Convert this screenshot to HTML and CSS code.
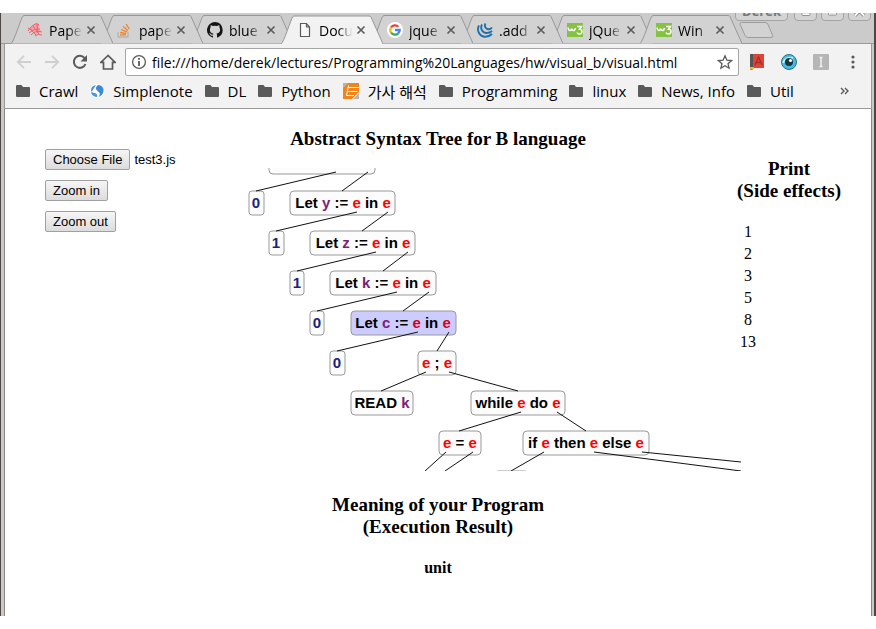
FILE: index.html
```html
<!DOCTYPE html>
<html lang="en">
<head>
<meta charset="utf-8">
<title>Document</title>
<link rel="stylesheet" href="styles.css">
</head>
<body>
<svg class="defs" aria-hidden="true">
  <symbol id="tab" viewBox="0 0 102 29"><path d="M0 28.5 C3 27 10 3 12 1 Q12.500 .5 14 .5 H88 Q89.500 .5 90 1.500 L102 28.500"/></symbol>
  <symbol id="close" viewBox="0 0 10 10"><path d="M1.500 1.500 8.500 8.500M8.500 1.500 1.500 8.500" fill="none" stroke="#5a5a5a" stroke-width="1.600"/></symbol>
  <symbol id="folder" viewBox="0 0 14 12"><path d="M1 0H5.500L7 2H13Q14 2 14 3V11Q14 12 13 12H1Q0 12 0 11V1Q0 0 1 0Z" fill="#5a5a5a"/></symbol>
  <symbol id="w3" viewBox="0 0 16 16"><rect y="1" width="16" height="14" fill="#84c341"/><path d="M1 5.500q.5 3 2 3t1.500-2q.5 2 2 2T8.500 6M10 4.500h4.500L12.500 7.300q2.500 0 2.500 2.200T12.500 12Q10.500 12 10 10.500" fill="none" stroke="#fff" stroke-width="1.500"/></symbol>
</svg>
<div class="window">
  <header class="chrome">
    <div class="titlebar">
      <ul class="tabs">
        <li class="tab"><svg class="shape"><use href="#tab"/></svg>
          <svg class="fav" viewBox="0 0 16 16"><path d="M3 6Q6 2 10 2q3 1 2 4l2 3-5 3-5-3z" fill="#f5a3a8"/><path d="M1 9Q4 4 8 2q3-1 4 1M2 11q5-5 11-4M4 13q4-5 11-3M3 7l6 6M6 4l6 8M10 2l1 9M8 14q3-3 7-1M1 6l4 2" fill="none" stroke="#f0626c" stroke-width="1"/></svg>
          <span class="name">Pape</span><button class="close" aria-label="Close tab"><svg><use href="#close"/></svg></button></li>
        <li class="tab"><svg class="shape"><use href="#tab"/></svg>
          <svg class="fav" viewBox="0 0 16 16"><path d="M1 10v5h10v-5" fill="none" stroke="#b5b5b0" stroke-width="1.300"/><path d="M3 12.800h6M3.200 10.500l6 .8M4 7.500l6 2.300M6 4.500l5 4M9 2l3.300 5" fill="none" stroke="#f48024" stroke-width="1.300"/></svg>
          <span class="name">pape</span><button class="close" aria-label="Close tab"><svg><use href="#close"/></svg></button></li>
        <li class="tab"><svg class="shape"><use href="#tab"/></svg>
          <svg class="fav" viewBox="0 0 16 16"><path d="M8 0a8 8 0 0 0-2.500 15.600c.4.100.5-.2.500-.4v-1.500c-2.200.500-2.700-1-2.700-1-.4-.9-.9-1.200-.9-1.200-.7-.5.100-.5.100-.5.800.1 1.200.8 1.200.8.700 1.200 1.900.9 2.300.7.100-.5.300-.9.500-1.100-1.800-.2-3.600-.9-3.600-4 0-.9.300-1.600.8-2.100-.1-.2-.4-1 .1-2.100 0 0 .7-.2 2.200.8a7.500 7.500 0 0 1 4 0c1.500-1 2.200-.8 2.200-.8.400 1.100.2 1.900.1 2.100.5.600.8 1.300.8 2.100 0 3.100-1.900 3.700-3.700 3.900.3.300.6.800.6 1.500v2.200c0 .2.100.5.600.4A8 8 0 0 0 8 0z" fill="#151515"/></svg>
          <span class="name">blue</span><button class="close" aria-label="Close tab"><svg><use href="#close"/></svg></button></li>
        <li class="tab active"><svg class="shape"><use href="#tab"/></svg>
          <svg class="fav" viewBox="0 0 16 16"><path d="M3.500 1.500h6l3 3.500v9.500h-9zM9.500 1.500V5h3" fill="#f8f8f8" stroke="#5a5a5a" stroke-width="1.200"/></svg>
          <span class="name">Docu</span><button class="close" aria-label="Close tab"><svg><use href="#close"/></svg></button></li>
        <li class="tab"><svg class="shape"><use href="#tab"/></svg>
          <svg class="fav" viewBox="0 0 16 16"><circle cx="8" cy="8" r="8" fill="#fff"/><g fill="none" stroke-width="2.300"><path d="M4 5.500A4.700 4.700 0 0 1 11.300 4.700" stroke="#ea4335"/><path d="M4 5.500A4.700 4.700 0 0 0 4 10.500" stroke="#fbbc05"/><path d="M4 10.500A4.700 4.700 0 0 0 11.200 11.400" stroke="#34a853"/><path d="M8 8h4.700A4.700 4.700 0 0 1 11.200 11.400" stroke="#4285f4"/></g></svg>
          <span class="name">jque</span><button class="close" aria-label="Close tab"><svg><use href="#close"/></svg></button></li>
        <li class="tab"><svg class="shape"><use href="#tab"/></svg>
          <svg class="fav" viewBox="0 0 16 16"><path d="M2 3.500C-.5 8 2 14 7.500 14.700Q12 15 15 12M5 2.500C3 6 5 10.500 9 11Q12.500 11.300 15 9M8.500 1.500C7 4 8.500 7 11 7.300Q13.500 7.500 15 5.500" fill="none" stroke="#2070ac" stroke-width="1.900"/></svg>
          <span class="name">.add</span><button class="close" aria-label="Close tab"><svg><use href="#close"/></svg></button></li>
        <li class="tab"><svg class="shape"><use href="#tab"/></svg>
          <svg class="fav"><use href="#w3"/></svg>
          <span class="name">jQue</span><button class="close" aria-label="Close tab"><svg><use href="#close"/></svg></button></li>
        <li class="tab"><svg class="shape"><use href="#tab"/></svg>
          <svg class="fav"><use href="#w3"/></svg>
          <span class="name">Win</span><button class="close" aria-label="Close tab"><svg><use href="#close"/></svg></button></li>
      </ul>
      <button class="newtab" aria-label="New tab"><svg viewBox="0 0 36 18"><path d="M2.500 1.500Q.5 1.500 1.200 3.500L6 14.500Q7 16.500 9 16.500H32Q34.500 16.500 33.700 14.500L29 3.500Q28 1.500 26 1.500Z" fill="#d2d2d2" stroke="#9c9c9c"/></svg></button>
      <div class="controls">
        <button class="user">Derek</button>
        <button class="ctl" aria-label="Minimize"><svg viewBox="0 0 22 20"><rect x="7" y="12" width="9" height="3" rx="1" fill="#fff" stroke="#888"/></svg></button>
        <button class="ctl" aria-label="Maximize"><svg viewBox="0 0 22 20"><rect x="6.500" y="5.500" width="9" height="9" rx="1" fill="#fff" stroke="#888"/><rect x="9" y="9" width="4" height="3" fill="#ccc" stroke="#888"/></svg></button>
        <button class="ctl" aria-label="Close"><svg viewBox="0 0 22 20"><path d="M6 5l10 10M16 5L6 15" stroke="#888" stroke-width="4"/><path d="M6 5l10 10M16 5L6 15" stroke="#fff" stroke-width="2"/></svg></button>
      </div>
    </div>
    <div class="toolbar">
      <nav class="nav">
        <button aria-label="Back"><svg viewBox="0 0 16 16"><path d="M15 8H2M8 1.800 1.800 8 8 14.200" fill="none" stroke="#cfcfcf" stroke-width="1.800"/></svg></button>
        <button aria-label="Forward"><svg viewBox="0 0 16 16"><path d="M1 8H14M8 1.800 14.200 8 8 14.200" fill="none" stroke="#cfcfcf" stroke-width="1.800"/></svg></button>
        <button aria-label="Reload"><svg viewBox="0 0 16 16"><path d="M13.500 10A6 6 0 1 1 12.500 4" fill="none" stroke="#5a5a5a" stroke-width="2"/><path d="M15 1v6.500H8.500z" fill="#5a5a5a"/></svg></button>
        <button aria-label="Home"><svg viewBox="0 0 16 16"><path d="M8 1.500.8 8.300H3.500V15H12.500V8.300H15.200Z" fill="none" stroke="#5a5a5a" stroke-width="1.700"/></svg></button>
      </nav>
      <div class="omnibox">
        <svg class="info" viewBox="0 0 16 16"><circle cx="8" cy="8" r="6.400" fill="none" stroke="#5a5a5a" stroke-width="1.300"/><path d="M8 4v1.800M8 7v5" stroke="#5a5a5a" stroke-width="1.800"/></svg>
        <input type="text" aria-label="Address" value="file:///home/derek/lectures/Programming%20Languages/hw/visual_b/visual.html">
        <button aria-label="Bookmark this page"><svg viewBox="0 0 16 16"><path d="M8 1.800 9.900 6.200 14.500 6.600 11 9.700 12.100 14.200 8 11.800 3.900 14.200 5 9.700 1.500 6.600 6.100 6.200Z" fill="none" stroke="#5a5a5a" stroke-width="1.300"/></svg></button>
      </div>
      <div class="extensions">
        <button aria-label="Dictionary"><svg viewBox="0 0 16 16"><path d="M1 0h14v14H5l-2 2H1z" fill="#dc4437"/><path d="M1 0h3v14H1z" fill="#555"/><path d="M1 13h4l-1 3-1-1-2 1z" fill="#f4b428"/><path d="M6 11 9.500 3 13 11M7.500 8.500h4" fill="none" stroke="#ad2b22" stroke-width="1.300"/></svg></button>
        <button aria-label="Eye"><svg viewBox="0 0 16 16"><circle cx="8" cy="8" r="7.500" fill="#49b9dc" stroke="#28728c"/><path d="M2 9Q4 3 12 4" fill="none" stroke="#c4ecf8" stroke-width="2"/><circle cx="8" cy="8" r="4" fill="#163746"/><circle cx="9.500" cy="6.500" r="1.600" fill="#fff"/></svg></button>
        <button aria-label="Instapaper"><svg viewBox="0 0 16 16"><rect width="16" height="16" rx="1" fill="#b6b6b6"/><path d="M6.500 3.500h3M8 3.500v9M6.500 12.500h3" stroke="#f0f0f0" stroke-width="1.500"/></svg></button>
        <button aria-label="Menu"><svg viewBox="0 0 16 16" fill="#5a5a5a"><circle cx="8" cy="3" r="1.600"/><circle cx="8" cy="8" r="1.600"/><circle cx="8" cy="13" r="1.600"/></svg></button>
      </div>
    </div>
    <nav class="bookmarks">
      <a href="#"><svg class="folder"><use href="#folder"/></svg>Crawl</a>
      <a href="#"><svg class="folder round" viewBox="0 0 14 14"><circle cx="7" cy="7" r="7" fill="#fff"/><path d="M6 1Q1 2 1 6q0 3 4 3 3 1 2 4Q3 13 1 9" fill="#4a97db"/><path d="M8 1q4 0 5.500 4Q14 11 8.500 13q3-4-1-6Q4 4 8 1" fill="#3d8ad2"/></svg>Simplenote</a>
      <a href="#"><svg class="folder"><use href="#folder"/></svg>DL</a>
      <a href="#"><svg class="folder"><use href="#folder"/></svg>Python</a>
      <a href="#"><svg class="fav" viewBox="0 0 16 16"><path d="M0 0h16v16H0z" fill="#b5b5b5"/><path d="M0 5 5 0H16V10L10 16H0z" fill="#f08519"/><path d="M5.500 2.500 3.500 12.500H11M5.500 4.500H16M5 8.500H14.500M16 9.500 9.500 16" fill="none" stroke="#fff" stroke-width="1"/></svg>가사 해석</a>
      <a href="#"><svg class="folder"><use href="#folder"/></svg>Programming</a>
      <a href="#"><svg class="folder"><use href="#folder"/></svg>linux</a>
      <a href="#"><svg class="folder"><use href="#folder"/></svg>News, Info</a>
      <a href="#"><svg class="folder"><use href="#folder"/></svg>Util</a>
      <button class="more" aria-label="More bookmarks"><svg viewBox="0 0 9 8"><path d="M1 1l3 3-3 3M5 1l3 3-3 3" fill="none" stroke="#5a5a5a" stroke-width="1.400"/></svg></button>
    </nav>
  </header>
  <main class="page">
    <h3 class="title">Abstract Syntax Tree for B language</h3>
    <div class="work">
      <section class="tools">
        <input type="file" id="source" aria-label="Program source">
        <button>Zoom in</button>
        <button>Zoom out</button>
      </section>
      <svg class="tree" viewBox="245 168 496 303" role="img" aria-label="Syntax tree">
        <g class="box">
          <rect x="269" y="150" width="106" height="24" rx="4"/>
          <rect x="249" y="191" width="15" height="24" rx="3"/>
          <rect x="290" y="191" width="105" height="24" rx="4"/>
          <rect x="269" y="231" width="15" height="24" rx="3"/>
          <rect x="310" y="231" width="105" height="24" rx="4"/>
          <rect x="290" y="271" width="14" height="24" rx="3"/>
          <rect x="330" y="271" width="106" height="24" rx="4"/>
          <rect x="310" y="311" width="14" height="24" rx="3"/>
          <rect class="current" x="351" y="311" width="105" height="24" rx="4"/>
          <rect x="330" y="351" width="15" height="24" rx="3"/>
          <rect x="418" y="351" width="38" height="24" rx="4"/>
          <rect x="351" y="391" width="62" height="24" rx="4"/>
          <rect x="471" y="391" width="94" height="24" rx="4"/>
          <rect x="439" y="431" width="42" height="24" rx="4"/>
          <rect x="523" y="431" width="126" height="24" rx="4"/>
          <rect x="494" y="471" width="35" height="24" rx="4"/>
        </g>
        <path class="links" d="M336 172 256 191M368 172 342 191M357 212 276 231M388 212 362 231M376 252 297 271M408 252 383 271M397 292 317 311M429 292 403 311M418 332 337 351M449 332 437 351M426 372 381 391M449 372 518 391M521 412 459 431M557 412 586 431M446 452 425 471M473 452 445 471M544 452 511 471M594 452 741 471M642 452 741 462"/>
        <g class="label">
          <text class="num" x="256" y="208">0</text>
          <text x="343" y="208">Let <tspan class="var">y</tspan> := <tspan class="exp">e</tspan> in <tspan class="exp">e</tspan></text>
          <text class="num" x="276" y="248">1</text>
          <text x="363" y="248">Let <tspan class="var">z</tspan> := <tspan class="exp">e</tspan> in <tspan class="exp">e</tspan></text>
          <text class="num" x="297" y="288">1</text>
          <text x="383" y="288">Let <tspan class="var">k</tspan> := <tspan class="exp">e</tspan> in <tspan class="exp">e</tspan></text>
          <text class="num" x="317" y="328">0</text>
          <text class="picked" x="403" y="328">Let <tspan class="var">c</tspan> := <tspan class="exp">e</tspan> in <tspan class="exp">e</tspan></text>
          <text class="num" x="337" y="368">0</text>
          <text x="437" y="368"><tspan class="exp">e</tspan> ; <tspan class="exp">e</tspan></text>
          <text x="382" y="408">READ <tspan class="var">k</tspan></text>
          <text x="518" y="408">while <tspan class="exp">e</tspan> do <tspan class="exp">e</tspan></text>
          <text x="460" y="448"><tspan class="exp">e</tspan> = <tspan class="exp">e</tspan></text>
          <text x="586" y="448">if <tspan class="exp">e</tspan> then <tspan class="exp">e</tspan> else <tspan class="exp">e</tspan></text>
        </g>
      </svg>
      <section class="print">
        <h3>Print<br>(Side effects)</h3>
        <ul><li>1</li><li>2</li><li>3</li><li>5</li><li>8</li><li>13</li></ul>
      </section>
    </div>
    <section class="result">
      <h3>Meaning of your Program<br>(Execution Result)</h3>
      <h4>unit</h4>
    </section>
  </main>
</div>
<script src="app.js"></script>
</body>
</html>
```
FILE: styles.css
```css
* { box-sizing: border-box; }
body { margin: 0; padding: 13px 0; height: 100vh; background: #fff; color: #000; font-family: "Liberation Serif", serif; }
button { margin: 0; padding: 0; border: 0; background: none; font: inherit; color: inherit; }
svg { display: block; flex: none; }
ul { list-style: none; margin: 0; padding: 0; }
.defs { position: absolute; width: 0; height: 0; }

.window { display: flex; flex-direction: column; height: 100%; overflow: hidden; background: #cbc8c6; border-left: 1px solid #4c4846; border-right: 2px solid #4c4846; padding: 0 2px 0 3px; }
.chrome { font-family: "Open Sans", "Noto Sans CJK KR", sans-serif; font-size: 14px; }

.titlebar { position: relative; display: flex; height: 31px; margin: 0 -2px 0 -3px; padding: 2px 0 0 10px; background: #cbcbcb; border-bottom: 1px solid #9a9a9a; }
.tabs { display: flex; }
.tab { position: relative; display: flex; align-items: center; width: 102px; height: 30px; margin-right: -12px; padding: 0 17px 0 16px; z-index: 1; }
.tab:nth-child(1) { z-index: 3; }
.tab:nth-child(2) { z-index: 2; }
.tab:nth-child(5) { z-index: 3; }
.tab:nth-child(6) { z-index: 2; }
.tab:nth-child(7) { margin-right: -13px; }
.tab.active { z-index: 4; }
.tab .shape { position: absolute; left: 0; top: 0; width: 102px; height: 29px; fill: #d2d2d2; stroke: #989898; z-index: -1; }
.tab.active .shape { fill: #f2f2f2; height: 30px; }
.fav { width: 16px; height: 16px; }
.name { flex: 1; min-width: 0; margin: 0 2px 0 6px; white-space: nowrap; -webkit-mask-image: linear-gradient(90deg, #000 55%, transparent 95%); mask-image: linear-gradient(90deg, #000 55%, transparent 95%); }
.close svg { width: 10px; height: 10px; }
.newtab { align-self: flex-start; margin: 6px 0 0 9px; }
.newtab svg { width: 36px; height: 18px; }
.controls { position: absolute; right: 3px; top: 0; display: flex; gap: 4px; height: 8px; overflow: hidden; align-items: flex-end; }
.user, .ctl { flex: none; height: 20px; border: 1px solid #a4a4a4; border-radius: 4px; background: #d4d4d4; }
.user { width: 53px; margin-right: 2px; font-size: 13px; font-weight: bold; line-height: 14px; color: #777; }
.ctl { width: 23px; }
.ctl svg { width: 21px; height: 18px; }

.toolbar { display: flex; align-items: center; height: 36px; padding: 0 10px 0 11px; background: #f2f2f2; border: solid #999; border-width: 0 1px; }
.nav { display: flex; gap: 12px; margin-right: 9px; }
.nav svg, .extensions svg, .omnibox svg { width: 16px; height: 16px; }
.omnibox { flex: 1; display: flex; align-items: center; height: 28px; padding: 0 5px; background: #fff; border: 1px solid #a6a6a6; border-radius: 2px; }
.omnibox input { flex: 1; min-width: 0; margin: 0 0 0 5px; padding: 0; border: 0; outline: 0; background: none; font: inherit; }
.extensions { display: flex; gap: 16px; margin-left: 10px; }

.bookmarks { display: flex; align-items: center; height: 29px; padding: 0 11px 6px; background: #f2f2f2; border: solid #999; border-width: 0 1px 1px; gap: 12px; }
.bookmarks a { display: flex; align-items: center; gap: 9px; color: inherit; font-size: 15px; text-decoration: none; white-space: nowrap; }
.folder { width: 14px; height: 12px; }
.folder.round { height: 14px; }
.more { margin: 0 11px 0 auto; }
.more svg { width: 9px; height: 8px; }

.page { flex: 1; background: #fff; border: solid #8a8684; border-width: 0 1px; padding-top: 19px; }
h3 { margin: 0; font-size: 19px; line-height: 22px; text-align: center; }
h4 { margin: 0; font-size: 16px; line-height: 18px; text-align: center; }
.title { line-height: 21px; }
.work { display: grid; grid-template-columns: 200px minmax(0, 1fr) 104px; align-items: start; padding: 0 30px 0 40px; }
.tools { display: flex; flex-direction: column; align-items: flex-start; gap: 10px; }
.tools, .tools input, .tools button { font-family: "Liberation Sans", sans-serif; font-size: 13px; }
.tools input { width: 190px; height: 21px; }
.tools button, .tools input::file-selector-button { height: 21px; padding: 0 7px; border: 1px solid #a0a0a0; border-radius: 2px; background: linear-gradient(#f6f6f6, #dcdcdc); color: #000; font-family: "Liberation Sans", sans-serif; font-size: 13px; }
.tree { width: calc(100% + 4px); margin-top: 19px; }
.box rect { fill: #fcfcfc; stroke: #999; }
.box .current { fill: #ccf; }
.links { fill: none; stroke: #111; }
.label { font-family: "Liberation Sans", sans-serif; font-size: 15px; font-weight: bold; text-anchor: middle; }
.num { fill: #1a237e; }
.var { fill: #7b1f7b; }
.exp { fill: #f00; }
.picked .exp { fill: #d4001c; }
.print { white-space: nowrap; padding-top: 9px; }
.print ul { width: fit-content; margin: 19px 0 0 3px; font-size: 16px; line-height: 22px; text-align: center; }
.result { padding-top: 23px; }
.result h4 { margin-top: 21px; }
```
FILE: app.js
```js
const source = document.getElementById('source');
const picked = new DataTransfer();
picked.items.add(new File([''], 'test3.js'));
source.files = picked.files;
```
